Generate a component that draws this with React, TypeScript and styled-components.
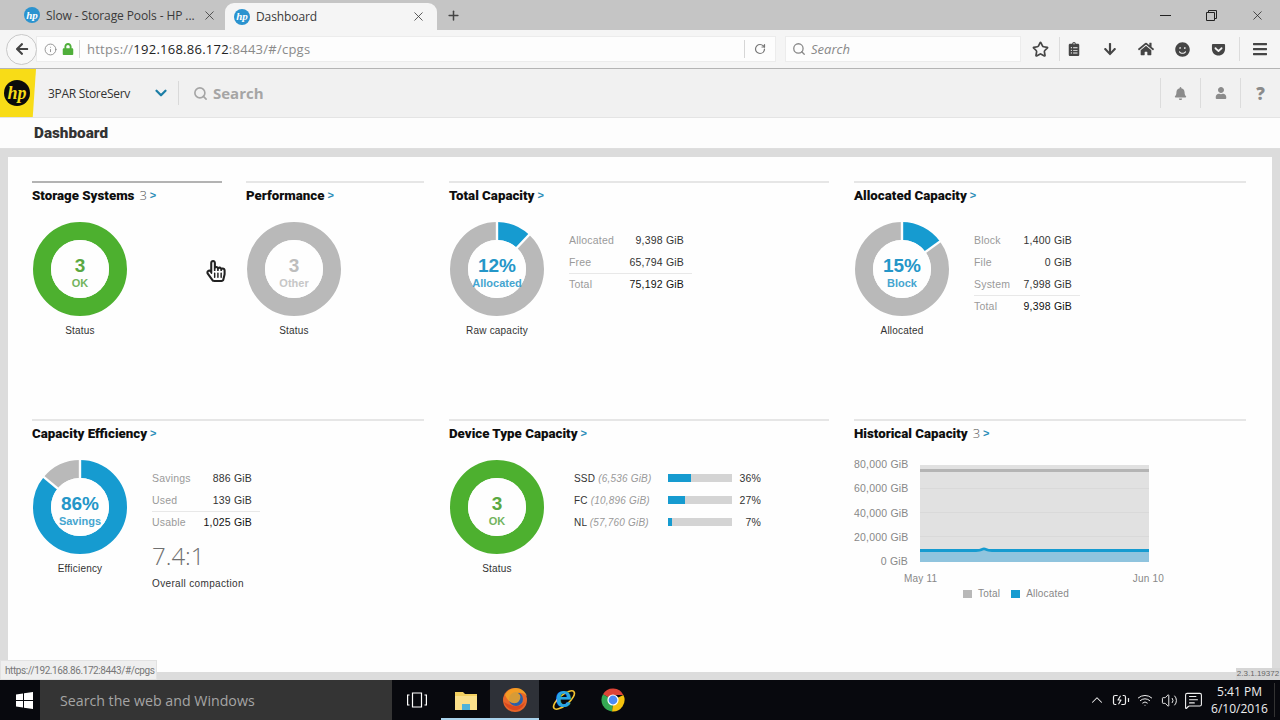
import React from "react";
import styled, { createGlobalStyle } from "styled-components";
import {
  BatteryCharging,
  ChevronDown,
  ChevronUp,
  Info,
  MessageSquareText,
  Plus,
  RotateCw,
  Search,
  Star,
  Volume2,
  Wifi,
  X,
} from "lucide-react";
import {
  FaArrowDown,
  FaBars,
  FaBell,
  FaClipboardList,
  FaGetPocket,
  FaHome,
  FaLock,
  FaRegHandPointer,
  FaSmile,
  FaUser,
} from "react-icons/fa";

const BLUE = "#169bd0";
const GREEN = "#4db02f";
const GREY = "#b9b9b9";

const GlobalStyle = createGlobalStyle`
  html, body {
    margin: 0;
    padding: 0;
    background: #dcdcdc;
    font-family: "Liberation Sans", Arial, sans-serif;
  }
  * { box-sizing: border-box; }
`;

const Screen = styled.div`
  position: relative;
  width: 1280px;
  height: 720px;
  display: flex;
  flex-direction: column;
  overflow: hidden;
`;

/* browser chrome */

const TabStrip = styled.div`
  height: 30px;
  flex: none;
  display: flex;
  align-items: flex-end;
  background: #c5c5c5;
`;

const Tab = styled.div<{ $active?: boolean }>`
  height: ${({ $active }) => ($active ? "27px" : "30px")};
  width: ${({ $active }) => ($active ? "212px" : "225px")};
  padding: ${({ $active }) => ($active ? "0 11px 0 9px" : "0 8px 0 24px")};
  display: flex;
  align-items: center;
  gap: 6px;
  font-family: "Open Sans", sans-serif;
  font-size: 12px;
  letter-spacing: -0.1px;
  color: #3a3a3a;
  background: ${({ $active }) => ($active ? "#f5f5f5" : "transparent")};
  border-radius: ${({ $active }) => ($active ? "9px 9px 0 0" : "0")};
`;

const TabTitle = styled.span`
  flex: 1;
  white-space: nowrap;
  overflow: hidden;
`;

const FavIcon = styled.span`
  width: 16px;
  height: 16px;
  flex: none;
  border-radius: 50%;
  background: #2b93cf;
  color: #fff;
  display: flex;
  align-items: center;
  justify-content: center;
  font-family: "Liberation Serif", serif;
  font-style: italic;
  font-weight: 700;
  font-size: 11px;
  line-height: 1;
`;

const NewTab = styled.div`
  width: 32px;
  height: 30px;
  display: flex;
  align-items: center;
  justify-content: center;
  color: #444;
`;

const WindowControls = styled.div`
  margin-left: auto;
  height: 30px;
  display: flex;
  align-items: center;
`;

const WindowButton = styled.div`
  width: 46px;
  height: 30px;
  display: flex;
  align-items: center;
  justify-content: center;
  color: #222;
`;

const NavBar = styled.div`
  height: 39px;
  flex: none;
  display: flex;
  align-items: center;
  padding-left: 6px;
  background: #f5f5f5;
  border-bottom: 1px solid #b4b4b4;
`;

const BackButton = styled.div`
  width: 31px;
  height: 31px;
  flex: none;
  z-index: 1;
  display: flex;
  align-items: center;
  justify-content: center;
  border-radius: 50%;
  background: #f8f8f8;
  border: 1px solid #c9c9c9;
  color: #444;
`;

const UrlBar = styled.div`
  width: 740px;
  height: 26px;
  margin-left: -1px;
  display: flex;
  align-items: center;
  padding-left: 7px;
  background: #fdfdfd;
  border: 1px solid #ececec;
  color: #888;
`;

const LockIcon = styled.span`
  display: flex;
  margin-left: 5px;
  color: #4fae3a;
`;

const UrlDivider = styled.span`
  width: 1px;
  height: 18px;
  margin: 0 7px 0 5px;
  background: #d6d6d6;
`;

const UrlText = styled.span`
  flex: 1;
  font-family: "Open Sans", sans-serif;
  font-size: 13px;
  letter-spacing: 0.25px;
  color: #8a8a8a;
  b {
    font-weight: 400;
    color: #222;
  }
`;

const ReloadButton = styled.span`
  width: 31px;
  height: 18px;
  display: flex;
  align-items: center;
  justify-content: center;
  border-left: 1px solid #d6d6d6;
  color: #777;
`;

const SearchBox = styled.div`
  width: 236px;
  height: 26px;
  margin-left: 9px;
  display: flex;
  align-items: center;
  gap: 5px;
  padding-left: 6px;
  background: #fdfdfd;
  border: 1px solid #ececec;
  color: #888;
  font-family: "Open Sans", sans-serif;
  font-style: italic;
  font-size: 13px;
`;

const ToolSlot = styled.div<{ $w: number; $after?: number }>`
  width: ${({ $w }) => $w}px;
  margin-right: ${({ $after }) => $after ?? 0}px;
  height: 30px;
  flex: none;
  display: flex;
  align-items: center;
  justify-content: center;
  color: #454545;
`;

const ToolDivider = styled.span<{ $before?: number }>`
  width: 1px;
  height: 24px;
  flex: none;
  margin-left: ${({ $before }) => $before ?? 0}px;
  background: #dcdcdc;
`;

/* app header */

const AppHeader = styled.header`
  height: 49px;
  flex: none;
  display: flex;
  align-items: center;
  background: #f1f1f1;
  border-bottom: 1px solid #e4e4e4;
`;

const LogoBlock = styled.div`
  width: 36px;
  height: 48px;
  flex: none;
  display: flex;
  align-items: center;
  padding-left: 4px;
  background: #f8dc17;
  clip-path: polygon(0 0, 100% 0, 91% 100%, 0 100%);
`;

const HpBadge = styled.span`
  width: 26px;
  height: 26px;
  border-radius: 50%;
  background: #0b0b0b;
  color: #f8dc17;
  display: flex;
  align-items: center;
  justify-content: center;
  font-family: "Liberation Serif", serif;
  font-style: italic;
  font-weight: 700;
  font-size: 18px;
  line-height: 1;
`;

const ProductName = styled.span`
  margin-left: 12px;
  width: 104px;
  font-family: "Open Sans", sans-serif;
  font-size: 12px;
  letter-spacing: -0.3px;
  color: #333;
`;

const ProductToggle = styled.span`
  display: flex;
  margin-right: 8px;
  color: #1c7ea6;
`;

const HeaderDivider = styled.span`
  width: 1px;
  height: 24px;
  flex: none;
  background: #d9d9d9;
`;

const AppSearch = styled.div`
  margin-left: 14px;
  display: flex;
  align-items: center;
  gap: 5px;
  color: #a5a5a5;
  font-family: "Open Sans", sans-serif;
  font-weight: 700;
  font-size: 15px;
`;

const HeaderTools = styled.div`
  margin-left: auto;
  display: flex;
  align-items: center;
`;

const HeaderTool = styled.div`
  width: 40px;
  height: 30px;
  display: flex;
  align-items: center;
  justify-content: center;
  border-left: 1px solid #dcdcdc;
  color: #8b8b8b;
  font-family: "Open Sans", sans-serif;
  font-weight: 800;
  font-size: 17px;
`;

const SubHeader = styled.div`
  height: 31px;
  flex: none;
  display: flex;
  align-items: center;
  padding-left: 34px;
  background: #fdfdfd;
  border-bottom: 1px solid #dedede;
`;

const PageTitle = styled.h1`
  margin: 0;
  font-family: "Roboto", sans-serif;
  font-weight: 900;
  font-size: 15.3px;
  color: #333;
`;

/* dashboard */

const PageBody = styled.main`
  flex: 1;
  min-height: 0;
  padding: 8px;
  background: #dcdcdc;
  display: flex;
`;

const Panel = styled.div`
  flex: 1;
  padding: 24px 26px 0 24px;
  background: #fefefe;
  display: grid;
  grid-template-columns: 392px 380px 392px;
  grid-template-rows: 238px 238px;
  column-gap: 25px;
`;

const SplitCell = styled.div`
  display: grid;
  grid-template-columns: 190px 178px;
  column-gap: 24px;
`;

const Card = styled.section<{ $selected?: boolean }>`
  border-top: 2px solid ${({ $selected }) => ($selected ? "#b3b3b3" : "#e6e6e6")};
`;

const CardTitle = styled.h2`
  margin: 0 0 15px;
  height: 24px;
  display: flex;
  align-items: center;
  gap: 5px;
  font-family: "Roboto", sans-serif;
  font-weight: 900;
  font-size: 13.3px;
  color: #0f0f0f;
  white-space: nowrap;
`;

const TitleCount = styled.span`
  font-family: "Open Sans", sans-serif;
  font-weight: 300;
  font-size: 13px;
  color: #555;
`;

const TitleArrow = styled.span`
  font-family: "Liberation Sans", sans-serif;
  font-weight: 700;
  font-size: 11px;
  color: #2a8db8;
  margin-left: -2px;
`;

const CardBody = styled.div<{ $tight?: boolean }>`
  display: flex;
  align-items: flex-start;
  margin-top: ${({ $tight }) => ($tight ? "-2px" : "0")};
`;

const DonutBlock = styled.div`
  width: 94px;
  flex: none;
  margin-left: 1px;
`;

const DonutFrame = styled.div`
  position: relative;
  width: 94px;
  height: 94px;
`;

const DonutCenter = styled.div<{ $color: string }>`
  position: absolute;
  inset: 0;
  padding-top: 7px;
  display: flex;
  flex-direction: column;
  align-items: center;
  justify-content: center;
  color: ${({ $color }) => $color};
`;

const DonutValue = styled.span`
  font-size: 19px;
  font-weight: 700;
  line-height: 21px;
`;

const DonutLabel = styled.span`
  font-size: 11px;
  font-weight: 700;
  line-height: 14px;
  opacity: 0.85;
`;

const Caption = styled.div`
  margin-top: 8px;
  height: 14px;
  line-height: 14px;
  text-align: center;
  font-size: 10px;
  letter-spacing: 0.2px;
  color: #333;
  white-space: nowrap;
`;

const StatsColumn = styled.div<{ $w: number }>`
  margin-left: 25px;
  padding-top: 7px;
  width: ${({ $w }) => $w}px;
`;

const StatRow = styled.div<{ $total?: boolean }>`
  height: 22px;
  padding-right: 8px;
  display: flex;
  align-items: center;
  justify-content: space-between;
  font-size: 10.5px;
  letter-spacing: 0.2px;
  box-shadow: ${({ $total }) => ($total ? "inset 0 1px 0 #e8e8e8" : "none")};
  color: ${({ $total }) => ($total ? "#111" : "#333")};
`;

const StatName = styled.span`
  color: #9a9a9a;
`;

const Ratio = styled.div`
  margin-top: 8px;
  height: 30px;
  line-height: 30px;
  font-family: "Open Sans", sans-serif;
  font-weight: 300;
  font-size: 24px;
  color: #707070;
`;

const RatioCaption = styled.div`
  margin-top: 6px;
  line-height: 14px;
  font-size: 10px;
  letter-spacing: 0.35px;
  color: #333;
  white-space: nowrap;
`;

const DeviceList = styled.div`
  margin-left: 30px;
  padding-top: 7px;
`;

const DeviceRow = styled.div`
  height: 22px;
  display: grid;
  grid-template-columns: 94px 64px 29px;
  align-items: center;
  font-size: 10px;
  letter-spacing: 0.2px;
  color: #333;
  white-space: nowrap;
  em {
    color: #999;
  }
`;

const BarTrack = styled.div`
  height: 8px;
  background: #d4d4d4;
`;

const BarFill = styled.div<{ $pct: number }>`
  height: 8px;
  width: ${({ $pct }) => $pct}%;
  background: ${BLUE};
`;

const DevicePct = styled.span`
  text-align: right;
  font-size: 10.5px;
`;

const ChartArea = styled.div`
  width: 320px;
`;

const ChartRow = styled.div`
  display: flex;
  align-items: flex-start;
`;

const YAxis = styled.div`
  width: 54px;
  height: 109px;
  display: flex;
  flex-direction: column;
  justify-content: space-between;
  text-align: right;
  font-size: 10.5px;
  line-height: 12px;
  letter-spacing: 0.2px;
  color: #888;
  white-space: nowrap;
`;

const Plot = styled.svg`
  margin: 5px 0 0 12px;
  display: block;
`;

const XAxis = styled.div`
  width: 260px;
  margin: 6px 0 0 50px;
  display: flex;
  justify-content: space-between;
  font-size: 10px;
  line-height: 12px;
  letter-spacing: 0.2px;
  color: #888;
`;

const Legend = styled.div`
  margin: 3px 0 0 109px;
  display: flex;
  align-items: center;
  font-size: 10px;
  line-height: 12px;
  letter-spacing: 0.2px;
  color: #888;
`;

const LegendSwatch = styled.span<{ $color: string }>`
  width: 9px;
  height: 8px;
  margin-right: 6px;
  background: ${({ $color }) => $color};
`;

const LegendText = styled.span`
  margin-right: 11px;
`;

/* overlays */

const HandCursor = styled.div`
  position: absolute;
  left: 205px;
  top: 260px;
  color: #222;
  display: flex;
`;

const StatusTip = styled.div`
  position: absolute;
  left: 0;
  top: 660px;
  width: 157px;
  height: 20px;
  padding-left: 4px;
  display: flex;
  align-items: center;
  background: #efefef;
  border: 1px solid #e2e2e2;
  font-family: "Roboto", sans-serif;
  font-size: 10px;
  letter-spacing: -0.4px;
  color: #777;
  white-space: nowrap;
`;

const BuildTag = styled.div`
  position: absolute;
  right: 0;
  top: 668px;
  width: 44px;
  height: 12px;
  background: #d6d6d6;
  text-align: center;
  font-size: 8px;
  line-height: 12px;
  color: #666;
  white-space: nowrap;
`;

/* taskbar */

const Taskbar = styled.footer`
  height: 40px;
  flex: none;
  display: flex;
  align-items: stretch;
  background: #08090e;
`;

const StartButton = styled.div`
  width: 40px;
  flex: none;
  padding-left: 8px;
  display: flex;
  align-items: center;
  justify-content: center;
`;

const TaskSearch = styled.div`
  width: 352px;
  flex: none;
  padding-left: 20px;
  display: flex;
  align-items: center;
  background: #343434;
  font-family: "Open Sans", sans-serif;
  font-size: 14.2px;
  color: #a5a5a5;
`;

const TaskButton = styled.div<{ $open?: boolean; $active?: boolean }>`
  width: 49px;
  flex: none;
  display: flex;
  align-items: center;
  justify-content: center;
  color: #fff;
  background: ${({ $active }) => ($active ? "#2e3138" : "transparent")};
  box-shadow: ${({ $open }) => ($open ? "inset 0 -2px 0 #a9d2ec" : "none")};
`;

const Tray = styled.div`
  margin-left: auto;
  display: flex;
  align-items: center;
  color: #eee;
  padding-right: 5px;
`;

const TrayIcon = styled.div`
  width: 24px;
  display: flex;
  justify-content: center;
`;

const Clock = styled.div`
  width: 70px;
  text-align: center;
  font-family: "Open Sans", sans-serif;
  font-size: 12px;
  line-height: 17px;
  color: #eee;
  white-space: nowrap;
  border-right: 1px solid #333;
`;

const IeGlyph = styled.span`
  position: absolute;
  inset: 0;
  display: flex;
  align-items: center;
  justify-content: center;
  font-family: "Liberation Sans", sans-serif;
  font-weight: 700;
  font-size: 30px;
  line-height: 26px;
  padding-bottom: 6px;
  color: #28a5e3;
`;

const IeFrame = styled.div`
  position: relative;
  width: 26px;
  height: 26px;
`;

type Segment = { pct: number; color: string };

const Donut: React.FC<{
  segments: Segment[];
  value: string;
  label: string;
  color: string;
  caption: string;
}> = ({ segments, value, label, color, caption }) => {
  const starts = segments.map((_, i) =>
    segments.slice(0, i).reduce((sum, s) => sum + s.pct, 0)
  );
  return (
    <DonutBlock>
      <DonutFrame>
        <svg width="94" height="94" viewBox="0 0 94 94">
          {segments.map((s, i) => (
            <circle
              key={s.color}
              cx="47"
              cy="47"
              r="38"
              fill="none"
              stroke={s.color}
              strokeWidth="18"
              pathLength={100}
              strokeDasharray={`${s.pct} ${100 - s.pct}`}
              strokeDashoffset={-starts[i]}
              transform="rotate(-90 47 47)"
            />
          ))}
          {segments.length > 1 &&
            starts.map((at) => {
              const angle = (at / 100) * 2 * Math.PI;
              return (
                <line
                  key={at}
                  x1="47"
                  y1="47"
                  x2={47 + 50 * Math.sin(angle)}
                  y2={47 - 50 * Math.cos(angle)}
                  stroke="#fefefe"
                  strokeWidth="2.4"
                />
              );
            })}
          <circle cx="47" cy="47" r="29" fill="#fefefe" />
        </svg>
        <DonutCenter $color={color}>
          <DonutValue>{value}</DonutValue>
          <DonutLabel>{label}</DonutLabel>
        </DonutCenter>
      </DonutFrame>
      <Caption>{caption}</Caption>
    </DonutBlock>
  );
};

const Title: React.FC<{ text: string; count?: number }> = ({ text, count }) => (
  <CardTitle>
    {text}
    {count !== undefined && <TitleCount>{count}</TitleCount>}
    <TitleArrow>&gt;</TitleArrow>
  </CardTitle>
);

const Stats: React.FC<{ rows: [string, string][] }> = ({ rows }) => (
  <>
    {rows.map(([name, val], i) => (
      <StatRow key={name} $total={i === rows.length - 1}>
        <StatName>{name}</StatName>
        <span>{val}</span>
      </StatRow>
    ))}
  </>
);

const FirefoxIcon = () => (
  <svg width="26" height="26" viewBox="0 0 26 26">
    <circle cx="13" cy="13" r="12" fill="#e8662a" />
    <circle cx="14" cy="12" r="7" fill="#2b5fa8" />
    <path d="M3 8c2-5 7-7 11-7 5 0 9 3 11 8-3-3-6-4-9-3 3 2 3 5 1 8-2 3-7 3-10 0-2-2-3-4-4-6z" fill="#f6a623" opacity="0.85" />
    <path d="M2 15c2 6 8 9 13 8 4-1 7-4 8-8-3 4-8 5-12 4-4-1-7-3-9-4z" fill="#d9481f" />
  </svg>
);

const ChromeIcon = () => (
  <svg width="24" height="24" viewBox="0 0 24 24">
    <path d="M12 12 2 6.2A11.5 11.5 0 0 1 22.4 7H12z" fill="#dc4437" />
    <path d="M12 12 22.4 7A11.5 11.5 0 0 1 11 23.4z" fill="#f4c20d" />
    <path d="M12 12 11 23.4A11.5 11.5 0 0 1 2 6.2z" fill="#35a853" />
    <circle cx="12" cy="12" r="5.6" fill="#fff" />
    <circle cx="12" cy="12" r="4.4" fill="#4c8bf5" />
  </svg>
);

const FolderIcon = () => (
  <svg width="24" height="22" viewBox="0 0 24 22">
    <path d="M1 3h8l2 2h12v16H1z" fill="#f3d05f" />
    <path d="M1 7h22v14H1z" fill="#fbe08a" />
    <rect x="8" y="15" width="8" height="6" fill="#4fb3d9" />
  </svg>
);

const WindowsIcon = () => (
  <svg width="17" height="17" viewBox="0 0 17 17" fill="#fff">
    <path d="M0 2.4 7 1.4V8H0zM8 1.3 17 0v8H8zM0 9h7v6.6l-7-1zM8 9h9v8l-9-1.3z" />
  </svg>
);

const IeIcon = () => (
  <IeFrame>
    <svg width="26" height="26" viewBox="0 0 26 26">
      <ellipse cx="13" cy="13" rx="13" ry="5" fill="none" stroke="#f4c430" strokeWidth="1.6" transform="rotate(-40 13 13)" />
    </svg>
    <IeGlyph>e</IeGlyph>
  </IeFrame>
);

export default function App() {
  return (
    <Screen>
      <GlobalStyle />
      <TabStrip>
        <Tab>
          <FavIcon>hp</FavIcon>
          <TabTitle>Slow - Storage Pools - HP ...</TabTitle>
          <X size={15} strokeWidth={1.3} />
        </Tab>
        <Tab $active>
          <FavIcon>hp</FavIcon>
          <TabTitle>Dashboard</TabTitle>
          <X size={15} strokeWidth={1.3} />
        </Tab>
        <NewTab>
          <Plus size={15} strokeWidth={2.4} />
        </NewTab>
        <WindowControls>
          <WindowButton>
            <svg width="11" height="11" viewBox="0 0 11 11">
              <path d="M0 5.5h11" stroke="#222" />
            </svg>
          </WindowButton>
          <WindowButton>
            <svg width="11" height="11" viewBox="0 0 11 11" fill="none" stroke="#222">
              <path d="M.5 2.5h8v8h-8zM2.5 2.5v-2h8v8h-2" />
            </svg>
          </WindowButton>
          <WindowButton>
            <X size={15} strokeWidth={1.2} />
          </WindowButton>
        </WindowControls>
      </TabStrip>

      <NavBar>
        <BackButton>
          <FaArrowDown size={14} transform="rotate(90)" />
        </BackButton>
        <UrlBar>
          <Info size={13} strokeWidth={1.6} />
          <LockIcon>
            <FaLock size={12} />
          </LockIcon>
          <UrlDivider />
          <UrlText>
            https://<b>192.168.86.172</b>:8443/#/cpgs
          </UrlText>
          <ReloadButton>
            <RotateCw size={12} strokeWidth={2.4} />
          </ReloadButton>
        </UrlBar>
        <SearchBox>
          <Search size={14} strokeWidth={2.2} />
          Search
        </SearchBox>
        <ToolSlot $w={38}>
          <Star size={17} strokeWidth={2.4} />
        </ToolSlot>
        <ToolDivider />
        <ToolSlot $w={28} $after={4}>
          <FaClipboardList size={14} />
        </ToolSlot>
        <ToolSlot $w={36}>
          <FaArrowDown size={14} />
        </ToolSlot>
        <ToolSlot $w={36}>
          <FaHome size={16} />
        </ToolSlot>
        <ToolSlot $w={36}>
          <FaSmile size={15} />
        </ToolSlot>
        <ToolSlot $w={36}>
          <FaGetPocket size={15} />
        </ToolSlot>
        <ToolDivider $before={3} />
        <ToolSlot $w={40}>
          <FaBars size={16} />
        </ToolSlot>
      </NavBar>

      <AppHeader>
        <LogoBlock>
          <HpBadge>hp</HpBadge>
        </LogoBlock>
        <ProductName>3PAR StoreServ</ProductName>
        <ProductToggle>
          <ChevronDown size={18} strokeWidth={3} />
        </ProductToggle>
        <HeaderDivider />
        <AppSearch>
          <Search size={15} strokeWidth={2.6} />
          Search
        </AppSearch>
        <HeaderTools>
          <HeaderTool>
            <FaBell size={13} />
          </HeaderTool>
          <HeaderTool>
            <FaUser size={12} />
          </HeaderTool>
          <HeaderTool>?</HeaderTool>
        </HeaderTools>
      </AppHeader>

      <SubHeader>
        <PageTitle>Dashboard</PageTitle>
      </SubHeader>

      <PageBody>
        <Panel>
          <SplitCell>
            <Card $selected>
              <Title text="Storage Systems" count={3} />
              <CardBody>
                <Donut
                  segments={[{ pct: 100, color: GREEN }]}
                  value="3"
                  label="OK"
                  color="#5aa842"
                  caption="Status"
                />
              </CardBody>
            </Card>
            <Card>
              <Title text="Performance" />
              <CardBody>
                <Donut
                  segments={[{ pct: 100, color: GREY }]}
                  value="3"
                  label="Other"
                  color="#bdbdbd"
                  caption="Status"
                />
              </CardBody>
            </Card>
          </SplitCell>

          <Card>
            <Title text="Total Capacity" />
            <CardBody>
              <Donut
                segments={[
                  { pct: 12, color: BLUE },
                  { pct: 88, color: GREY },
                ]}
                value="12%"
                label="Allocated"
                color="#2496c8"
                caption="Raw capacity"
              />
              <StatsColumn $w={123}>
                <Stats
                  rows={[
                    ["Allocated", "9,398 GiB"],
                    ["Free", "65,794 GiB"],
                    ["Total", "75,192 GiB"],
                  ]}
                />
              </StatsColumn>
            </CardBody>
          </Card>

          <Card>
            <Title text="Allocated Capacity" />
            <CardBody>
              <Donut
                segments={[
                  { pct: 15, color: BLUE },
                  { pct: 85, color: GREY },
                ]}
                value="15%"
                label="Block"
                color="#2496c8"
                caption="Allocated"
              />
              <StatsColumn $w={106}>
                <Stats
                  rows={[
                    ["Block", "1,400 GiB"],
                    ["File", "0 GiB"],
                    ["System", "7,998 GiB"],
                    ["Total", "9,398 GiB"],
                  ]}
                />
              </StatsColumn>
            </CardBody>
          </Card>

          <Card>
            <Title text="Capacity Efficiency" />
            <CardBody>
              <Donut
                segments={[
                  { pct: 86, color: BLUE },
                  { pct: 14, color: GREY },
                ]}
                value="86%"
                label="Savings"
                color="#2496c8"
                caption="Efficiency"
              />
              <StatsColumn $w={108}>
                <Stats
                  rows={[
                    ["Savings", "886 GiB"],
                    ["Used", "139 GiB"],
                    ["Usable", "1,025 GiB"],
                  ]}
                />
                <Ratio>7.4:1</Ratio>
                <RatioCaption>Overall compaction</RatioCaption>
              </StatsColumn>
            </CardBody>
          </Card>

          <Card>
            <Title text="Device Type Capacity" />
            <CardBody>
              <Donut
                segments={[{ pct: 100, color: GREEN }]}
                value="3"
                label="OK"
                color="#5aa842"
                caption="Status"
              />
              <DeviceList>
                <DeviceRow>
                  <span>
                    SSD <em>(6,536 GiB)</em>
                  </span>
                  <BarTrack>
                    <BarFill $pct={36} />
                  </BarTrack>
                  <DevicePct>36%</DevicePct>
                </DeviceRow>
                <DeviceRow>
                  <span>
                    FC <em>(10,896 GiB)</em>
                  </span>
                  <BarTrack>
                    <BarFill $pct={27} />
                  </BarTrack>
                  <DevicePct>27%</DevicePct>
                </DeviceRow>
                <DeviceRow>
                  <span>
                    NL <em>(57,760 GiB)</em>
                  </span>
                  <BarTrack>
                    <BarFill $pct={7} />
                  </BarTrack>
                  <DevicePct>7%</DevicePct>
                </DeviceRow>
              </DeviceList>
            </CardBody>
          </Card>

          <Card>
            <Title text="Historical Capacity" count={3} />
            <CardBody $tight>
              <ChartArea>
                <ChartRow>
                  <YAxis>
                    <span>80,000 GiB</span>
                    <span>60,000 GiB</span>
                    <span>40,000 GiB</span>
                    <span>20,000 GiB</span>
                    <span>0 GiB</span>
                  </YAxis>
                  <Plot width="229" height="99" viewBox="0 0 229 99">
                    <rect y="2" width="229" height="97" fill="#e1e1e1" />
                    <path d="M0 25.5h229M0 49.5h229M0 73.5h229" stroke="#d9d9d9" />
                    <rect y="6" width="229" height="3" fill="#b4b4b4" />
                    <rect y="88" width="229" height="11" fill="#90c4de" />
                    <path d="M0 87.5H56q4 0 6-1t4 0q2 1 6 1H229" fill="none" stroke={BLUE} strokeWidth="3" />
                  </Plot>
                </ChartRow>
                <XAxis>
                  <span>May 11</span>
                  <span>Jun 10</span>
                </XAxis>
                <Legend>
                  <LegendSwatch $color="#b8b8b8" />
                  <LegendText>Total</LegendText>
                  <LegendSwatch $color={BLUE} />
                  <LegendText>Allocated</LegendText>
                </Legend>
              </ChartArea>
            </CardBody>
          </Card>
        </Panel>
      </PageBody>

      <Taskbar>
        <StartButton>
          <WindowsIcon />
        </StartButton>
        <TaskSearch>Search the web and Windows</TaskSearch>
        <TaskButton>
          <svg width="20" height="16" viewBox="0 0 20 16" fill="none" stroke="#fff" strokeWidth="1.2">
            <path d="M5.5 1h9v14h-9zM2.5 3H.6v10h1.9M17.5 3h1.9v10h-1.9" />
          </svg>
        </TaskButton>
        <TaskButton $open>
          <FolderIcon />
        </TaskButton>
        <TaskButton $open $active>
          <FirefoxIcon />
        </TaskButton>
        <TaskButton>
          <IeIcon />
        </TaskButton>
        <TaskButton>
          <ChromeIcon />
        </TaskButton>
        <Tray>
          <TrayIcon>
            <ChevronUp size={18} strokeWidth={1.4} />
          </TrayIcon>
          <TrayIcon>
            <BatteryCharging size={18} strokeWidth={1.6} />
          </TrayIcon>
          <TrayIcon>
            <Wifi size={16} strokeWidth={1.5} />
          </TrayIcon>
          <TrayIcon>
            <Volume2 size={17} strokeWidth={1.4} />
          </TrayIcon>
          <TrayIcon>
            <MessageSquareText size={19} strokeWidth={1.4} />
          </TrayIcon>
          <Clock>
            5:41 PM
            <br />
            6/10/2016
          </Clock>
        </Tray>
      </Taskbar>

      <HandCursor>
        <FaRegHandPointer size={22} />
      </HandCursor>
      <StatusTip>https://192.168.86.172:8443/#/cpgs</StatusTip>
      <BuildTag>2.3.1.19372</BuildTag>
    </Screen>
  );
}
